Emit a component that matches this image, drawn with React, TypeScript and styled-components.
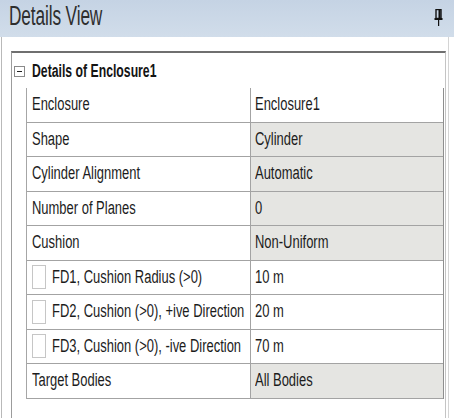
import styled, { createGlobalStyle } from "styled-components";

const GlobalStyle = createGlobalStyle`
  html, body {
    margin: 0;
    padding: 0;
    background: #ffffff;
  }
  body {
    font-family: "Liberation Sans", Arial, sans-serif;
    color: #1c1c1c;
  }
`;

const Frame = styled.div`
  width: 454px;
  height: 418px;
  display: flex;
  flex-direction: column;
  overflow: hidden;
  background: #ffffff;
`;

const Header = styled.header`
  height: 37px;
  flex: none;
  display: flex;
  align-items: center;
  justify-content: space-between;
  padding: 0 9px 4px 9px;
  box-sizing: border-box;
  background: linear-gradient(#c5d3e4, #d1ddea);
`;

// the UI font is drawn narrow, so text is squeezed horizontally
const Text = styled.span<{ $squeeze?: number }>`
  display: inline-block;
  white-space: nowrap;
  transform: scaleX(${(p) => p.$squeeze ?? 0.72});
  transform-origin: left center;
`;

const Title = styled(Text)`
  font-size: 27px;
  color: #2e2e2e;
  letter-spacing: -0.2px;
`;

const Pin = styled.svg`
  width: 9px;
  height: 17px;
  margin-top: 2px;
  margin-right: 2px;
`;

const Body = styled.div`
  flex: 1;
  width: 448px;
  margin-left: 1px;
  box-sizing: border-box;
  padding: 14px 2px 0 9px;
  border-left: 1px solid #b9b9b9;
  border-right: 1px solid #d4d4d4;
  display: flex;
`;

const Panel = styled.section`
  flex: 1;
  display: flex;
  flex-direction: column;
  border-top: 2px solid #6f6f6f;
  border-left: 1px solid #9c9c9c;
  border-right: 1px solid #c4c4c4;
`;

const GroupRow = styled.div`
  height: 35px;
  display: flex;
  align-items: center;
  padding-top: 2px;
  box-sizing: border-box;
`;

const Toggle = styled.div`
  width: 9px;
  height: 9px;
  margin: 0 7px 0 2px;
  border: 1px solid #8a8a8a;
  display: flex;
  align-items: center;
  justify-content: center;

  &::after {
    content: "";
    width: 5px;
    height: 1px;
    background: #202020;
  }
`;

const GroupTitle = styled(Text)`
  font-size: 18px;
  font-weight: bold;
  color: #141414;
`;

const Grid = styled.div`
  margin: 0 1px 0 14px;
  border-left: 1px solid #a6a6a6;
  border-right: 1px solid #8e8e8e;
`;

const Row = styled.div`
  display: grid;
  grid-template-columns: 224px 1fr;
  height: 34.5px;
`;

const Cell = styled.div<{ $shaded?: boolean; $label?: boolean }>`
  display: flex;
  align-items: center;
  box-sizing: border-box;
  padding-left: ${(p) => (p.$label ? 5 : 4)}px;
  border-bottom: 1px solid #a3a3a3;
  border-right: ${(p) => (p.$label ? "1px solid #a3a3a3" : "none")};
  background: ${(p) => (p.$shaded ? "#e5e5e2" : "#ffffff")};
  font-size: 18px;
  overflow: hidden;
`;

const Check = styled.span`
  width: 12px;
  height: 22px;
  flex: none;
  margin-right: 6px;
  border: 1px solid #c6c6c6;
  background: #ffffff;
`;

type Prop = {
  label: string;
  value: string;
  shaded?: boolean;
  check?: boolean;
};

const props: Prop[] = [
  { label: "Enclosure", value: "Enclosure1" },
  { label: "Shape", value: "Cylinder", shaded: true },
  { label: "Cylinder Alignment", value: "Automatic", shaded: true },
  { label: "Number of Planes", value: "0", shaded: true },
  { label: "Cushion", value: "Non-Uniform", shaded: true },
  { label: "FD1, Cushion Radius (>0)", value: "10 m", check: true },
  { label: "FD2, Cushion (>0), +ive Direction", value: "20 m", check: true },
  { label: "FD3, Cushion (>0), -ive Direction", value: "70 m", check: true },
  { label: "Target Bodies", value: "All Bodies", shaded: true },
];

function PinIcon() {
  return (
    <Pin viewBox="0 0 9 17">
      <rect x="2" y="0.5" width="5" height="9" fill="none" stroke="#111" strokeWidth="1.4" />
      <rect x="4.5" y="1" width="2" height="8.5" fill="#111" />
      <rect x="0.5" y="9" width="8" height="2" fill="#111" />
      <rect x="4" y="11" width="1.2" height="6" fill="#111" />
    </Pin>
  );
}

export default function App() {
  return (
    <>
      <GlobalStyle />
      <Frame>
        <Header>
          <Title $squeeze={0.64}>Details View</Title>
          <PinIcon />
        </Header>
        <Body>
          <Panel>
            <GroupRow>
              <Toggle />
              <GroupTitle $squeeze={0.68}>Details of Enclosure1</GroupTitle>
            </GroupRow>
            <Grid>
              {props.map((p) => (
                <Row key={p.label}>
                  <Cell $label>
                    {p.check && <Check />}
                    <Text>{p.label}</Text>
                  </Cell>
                  <Cell $shaded={p.shaded}>
                    <Text>{p.value}</Text>
                  </Cell>
                </Row>
              ))}
            </Grid>
          </Panel>
        </Body>
      </Frame>
    </>
  );
}
